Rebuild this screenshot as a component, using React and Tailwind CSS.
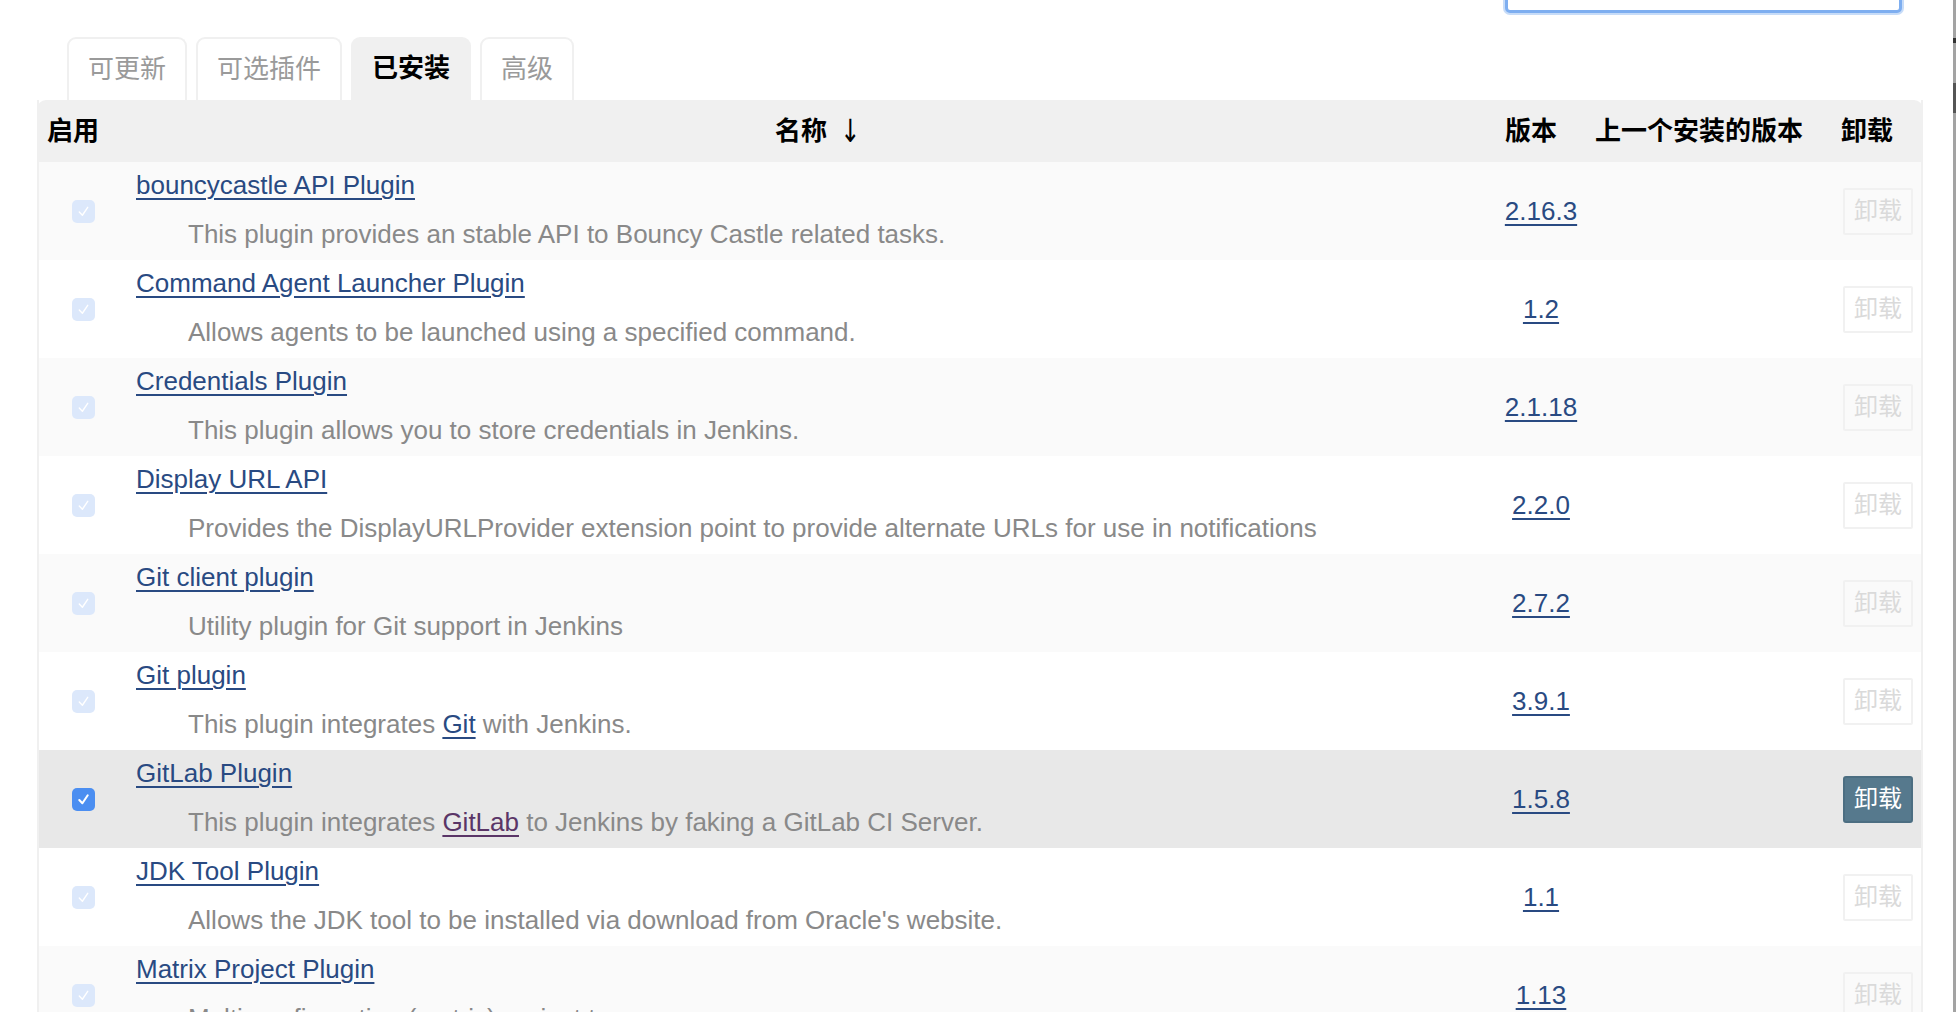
import React from "react";

const plugins = [
  { name: "bouncycastle API Plugin", desc: ["This plugin provides an stable API to Bouncy Castle related tasks."], version: "2.16.3" },
  { name: "Command Agent Launcher Plugin", desc: ["Allows agents to be launched using a specified command."], version: "1.2" },
  { name: "Credentials Plugin", desc: ["This plugin allows you to store credentials in Jenkins."], version: "2.1.18" },
  { name: "Display URL API", desc: ["Provides the DisplayURLProvider extension point to provide alternate URLs for use in notifications"], version: "2.2.0" },
  { name: "Git client plugin", desc: ["Utility plugin for Git support in Jenkins"], version: "2.7.2" },
  { name: "Git plugin", desc: ["This plugin integrates ", { link: "Git" }, " with Jenkins."], version: "3.9.1" },
  { name: "GitLab Plugin", desc: ["This plugin integrates ", { link: "GitLab", visited: true }, " to Jenkins by faking a GitLab CI Server."], version: "1.5.8", active: true },
  { name: "JDK Tool Plugin", desc: ["Allows the JDK tool to be installed via download from Oracle's website."], version: "1.1" },
  { name: "Matrix Project Plugin", desc: ["Multi-configuration (matrix) project type."], version: "1.13" },
];

const tabs = ["可更新", "可选插件", "已安装", "高级"];

const Check = ({ active }) => (
  <div className={active ? "w-[23px] h-[23px] rounded-[5px] bg-[#4b8ef1] flex items-center justify-center" : "w-[23px] h-[23px] rounded-[5px] bg-[#dce8fb] flex items-center justify-center"}>
    <svg width="15" height="15" viewBox="0 0 16 16">
      <path d="M3.5 8.5 L6.8 12 L12.5 3.5" fill="none" stroke="white" strokeWidth={active ? 2.2 : 1.5} strokeLinecap="round" strokeLinejoin="round" />
    </svg>
  </div>
);

const linkCls = "text-[#294a82] underline decoration-2 underline-offset-[4px]";

export default function App() {
  return (
    <div className="w-[1956px] h-[1012px] overflow-hidden bg-white flex font-['Liberation_Sans','Noto_Sans_CJK_SC',sans-serif]">
      <div className="flex-1">
        {/* search box, mostly scrolled away */}
        <div className="h-[13px] flex justify-end pr-[51px]">
          <div className="w-[397px] h-[44px] -mt-[31px] rounded-[5px] border-[3px] border-[#7eaef0] shadow-[0_0_0_2px_#c7dcf8] bg-white" />
        </div>

        {/* tabs */}
        <div className="mt-[24px] ml-[67px] flex gap-[9px] h-[63px]">
          {tabs.map((t) => (
            <div
              key={t}
              className={
                t === "已安装"
                  ? "px-[21px] flex items-center rounded-t-[9px] bg-[#f0f0f0] text-[26px] font-bold text-black"
                  : "px-[19px] flex items-center rounded-t-[9px] border-2 border-b-0 border-[#f0f0f0] bg-white text-[26px] text-[#9a9a9a]"
              }
            >
              {t}
            </div>
          ))}
        </div>

        {/* table */}
        <div className="ml-[37px] w-[1886px] border-x-2 border-[#f0f0f0]">
          <div className="-mx-[2px] h-[62px] bg-[#f0f0f0] rounded-t-[9px] grid grid-cols-[91px_1367px_92px_248px_88px] items-center text-[26px] font-bold text-black">
            <div className="pl-[10px]">启用</div>
            <div className="flex justify-center items-center gap-[10px] pl-[16px]">
              <span>名称</span>
              <span className="font-normal text-[32px] leading-none font-['DejaVu_Sans',sans-serif] scale-x-75">↓</span>
            </div>
            <div className="pl-[10px]">版本</div>
            <div className="pl-[8px]">上一个安装的版本</div>
            <div className="pl-[6px]">卸载</div>
          </div>

          {plugins.map((p, i) => (
            <div
              key={p.name}
              className={
                "grid grid-cols-[89px_1367px_92px_248px_86px] items-center " +
                (p.active ? "bg-[#e8e8e8]" : i % 2 === 0 ? "bg-[#fafafa]" : "bg-white")
              }
            >
              <div className="flex justify-center">
                <Check active={p.active} />
              </div>
              <div className="pl-[8px] pt-[8px] pb-[11px] text-[26px]">
                <div className="leading-[30px]">
                  <span className={linkCls}>{p.name}</span>
                </div>
                <div className="mt-[19px] leading-[30px] pl-[52px] text-[#898989] whitespace-nowrap">
                  {p.desc.map((d, k) =>
                    typeof d === "string" ? (
                      <span key={k}>{d}</span>
                    ) : (
                      <span key={k} className={d.visited ? "text-[#5a3567] underline decoration-2 underline-offset-[4px]" : linkCls}>
                        {d.link}
                      </span>
                    )
                  )}
                </div>
              </div>
              <div className="text-center text-[26px]">
                <span className={linkCls}>{p.version}</span>
              </div>
              <div />
              <div className="pl-[8px]">
                <div
                  className={
                    p.active
                      ? "w-[70px] h-[47px] rounded-[3px] border-2 border-[#4c6e82] bg-[#56798d] text-white text-[24px] flex items-center justify-center"
                      : "w-[70px] h-[47px] rounded-[2px] border-2 border-[#f1f1f1] text-[#dadada] text-[24px] flex items-center justify-center"
                  }
                >
                  卸载
                </div>
              </div>
            </div>
          ))}
        </div>
      </div>
      {/* edge of the window behind */}
      <div className="w-[3px] flex flex-col bg-[#a3a3a3]">
        <div className="h-[38px]" />
        <div className="h-[5px] bg-[#333]" />
        <div className="h-[40px]" />
        <div className="h-[30px] bg-[#555]" />
      </div>
    </div>
  );
}
